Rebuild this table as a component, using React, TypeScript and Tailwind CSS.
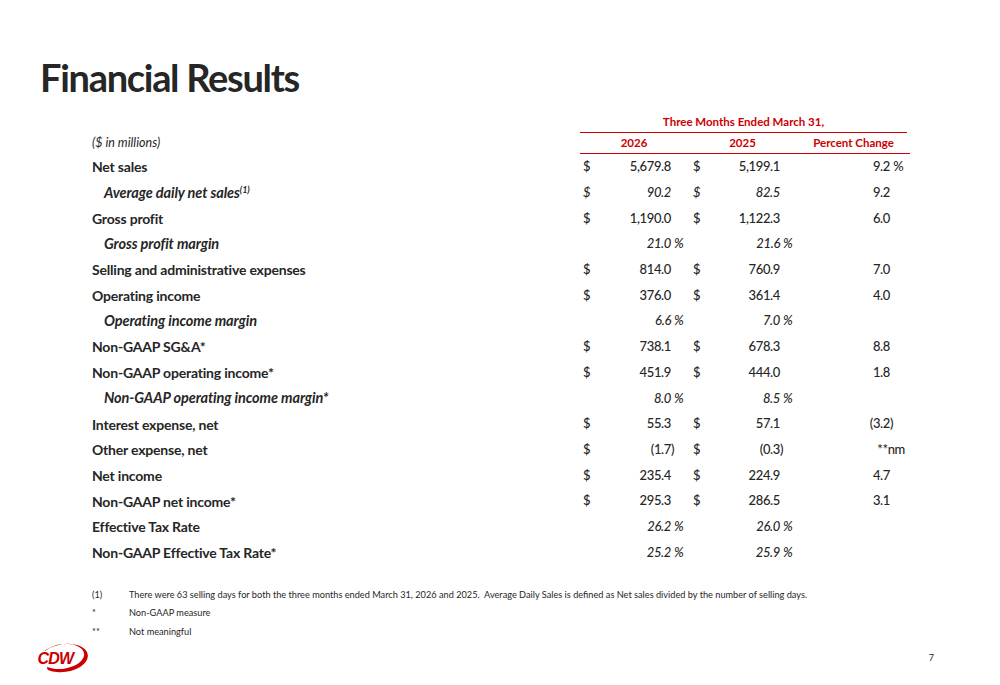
import React from "react";

type Row = {
  label: string;
  sup?: string;
  sub?: boolean;
  italicVals?: boolean;
  d1?: string;
  v1?: string;
  s1?: string;
  d2?: string;
  v2?: string;
  s2?: string;
  p?: string;
  ps?: string;
  wide?: boolean;
};

const rows: Row[] = [
  { label: "Net sales", d1: "$", v1: "5,679.8", d2: "$", v2: "5,199.1", p: "9.2", ps: " %" },
  { label: "Average daily net sales", sup: "(1)", sub: true, italicVals: true, d1: "$", v1: "90.2", d2: "$", v2: "82.5", p: "9.2" },
  { label: "Gross profit", d1: "$", v1: "1,190.0", d2: "$", v2: "1,122.3", p: "6.0" },
  { label: "Gross profit margin", sub: true, italicVals: true, v1: "21.0", s1: " %", v2: "21.6", s2: " %" },
  { label: "Selling and administrative expenses", d1: "$", v1: "814.0", d2: "$", v2: "760.9", p: "7.0" },
  { label: "Operating income", d1: "$", v1: "376.0", d2: "$", v2: "361.4", p: "4.0" },
  { label: "Operating income margin", sub: true, italicVals: true, v1: "6.6", s1: " %", v2: "7.0", s2: " %" },
  { label: "Non-GAAP SG&A*", d1: "$", v1: "738.1", d2: "$", v2: "678.3", p: "8.8" },
  { label: "Non-GAAP operating income*", d1: "$", v1: "451.9", d2: "$", v2: "444.0", p: "1.8" },
  { label: "Non-GAAP operating income margin*", sub: true, italicVals: true, v1: "8.0", s1: " %", v2: "8.5", s2: " %" },
  { label: "Interest expense, net", d1: "$", v1: "55.3", d2: "$", v2: "57.1", p: "(3.2", ps: ")" },
  { label: "Other expense, net", d1: "$", v1: "(1.7", s1: ")", d2: "$", v2: "(0.3", s2: ")", p: "**nm", wide: true },
  { label: "Net income", d1: "$", v1: "235.4", d2: "$", v2: "224.9", p: "4.7" },
  { label: "Non-GAAP net income*", d1: "$", v1: "295.3", d2: "$", v2: "286.5", p: "3.1" },
  { label: "Effective Tax Rate", italicVals: true, v1: "26.2", s1: " %", v2: "26.0", s2: " %" },
  { label: "Non-GAAP Effective Tax Rate*", italicVals: true, v1: "25.2", s1: " %", v2: "25.9", s2: " %" },
];

const cols = "grid grid-cols-[488px_20px_71px_17px_17px_75px_17px_93px_20px]";

function CdwLogo() {
  return (
    <svg width="54" height="34" viewBox="0 0 54 34">
      <defs>
        <clipPath id="cdw-clip">
          <rect x="10" y="0" width="44" height="34" />
        </clipPath>
      </defs>
      <g clipPath="url(#cdw-clip)" transform="rotate(-8 28 17)">
        <path
          fillRule="evenodd"
          fill="#cc0000"
          d="M4 17 a24 14 0 1 0 48 0 a24 14 0 1 0 -48 0 Z M4.5 15.3 a22 12.3 0 1 0 44 0 a22 12.3 0 1 0 -44 0 Z"
        />
      </g>
      <text
        x="1.5"
        y="22.5"
        fill="#cc0000"
        fontFamily="'Liberation Sans', Arial, sans-serif"
        fontWeight="700"
        fontStyle="italic"
        fontSize="16"
        letterSpacing="-0.8"
      >
        CDW
      </text>
    </svg>
  );
}

export default function App() {
  return (
    <div className="relative h-[685px] w-[1000px] overflow-hidden bg-white font-['Lato',sans-serif] text-[#262626]">
      <h1 className="pl-[40px] pt-[58px] text-[38px] font-bold leading-none tracking-[-1.3px]">
        Financial Results
      </h1>

      <div className="ml-[92px] mt-[15px] w-[818px]">
        <div className={`${cols} h-[22px] items-center`}>
          <div />
          <div className="col-span-8 mr-[3px] flex h-full items-center justify-center border-b-[1.5px] border-[#cc0000] text-[11.5px] font-bold text-[#cc0000]">
            Three Months Ended March 31,
          </div>
        </div>
        <div className={`${cols} h-[21px] items-center`}>
          <div className="text-[12.5px] italic">($ in millions)</div>
          <div className="col-span-8 grid h-full grid-cols-[108px_109px_113px] items-center border-b-[1.5px] border-[#cc0000] text-[11.5px] font-bold text-[#cc0000]">
            <div className="text-center">2026</div>
            <div className="text-center">2025</div>
            <div className="text-center">Percent Change</div>
          </div>
        </div>

        {rows.map((r) => {
          const vi = r.italicVals ? "italic" : "";
          return (
            <div key={r.label} className={`${cols} h-[25.73px] items-center text-[13px] font-medium`}>
              <div
                className={`font-bold ${
                  r.sub ? "pl-[12px] text-[14.5px] italic tracking-[-0.1px]" : "text-[14px] tracking-[-0.2px]"
                }`}
              >
                {r.label}
                {r.sup && <sup className="text-[9px] font-bold italic">{r.sup}</sup>}
              </div>
              <div className={`pl-[3px] ${vi}`}>{r.d1}</div>
              <div className={`text-right tracking-[-0.35px] ${vi}`}>{r.v1}</div>
              <div className={`whitespace-pre ${vi}`}>{r.s1}</div>
              <div className={`pl-[5px] ${vi}`}>{r.d2}</div>
              <div className={`text-right tracking-[-0.35px] ${vi}`}>{r.v2}</div>
              <div className={`whitespace-pre ${vi}`}>{r.s2}</div>
              <div className={`text-right tracking-[-0.35px] ${r.wide ? "mr-[-15px]" : ""}`}>{r.p}</div>
              <div className="whitespace-pre">{r.wide ? "" : r.ps}</div>
            </div>
          );
        })}
      </div>

      <div className="ml-[92px] mt-[20px] text-[9.2px]">
        <div className="flex h-[18.5px] items-center">
          <span className="w-[37px]">(1)</span>
          <span>
            There were 63 selling days for both the three months ended March 31, 2026 and 2025.{"\u00a0 "}Average
            Daily Sales is defined as Net sales divided by the number of selling days.
          </span>
        </div>
        <div className="flex h-[18.5px] items-center">
          <span className="w-[37px]">*</span>
          <span>Non-GAAP measure</span>
        </div>
        <div className="flex h-[18.5px] items-center">
          <span className="w-[37px]">**</span>
          <span>Not meaningful</span>
        </div>
      </div>

      <div className="flex items-center justify-between pl-[36px] pr-[66px]">
        <CdwLogo />
        <span className="text-[9px]">7</span>
      </div>
    </div>
  );
}
